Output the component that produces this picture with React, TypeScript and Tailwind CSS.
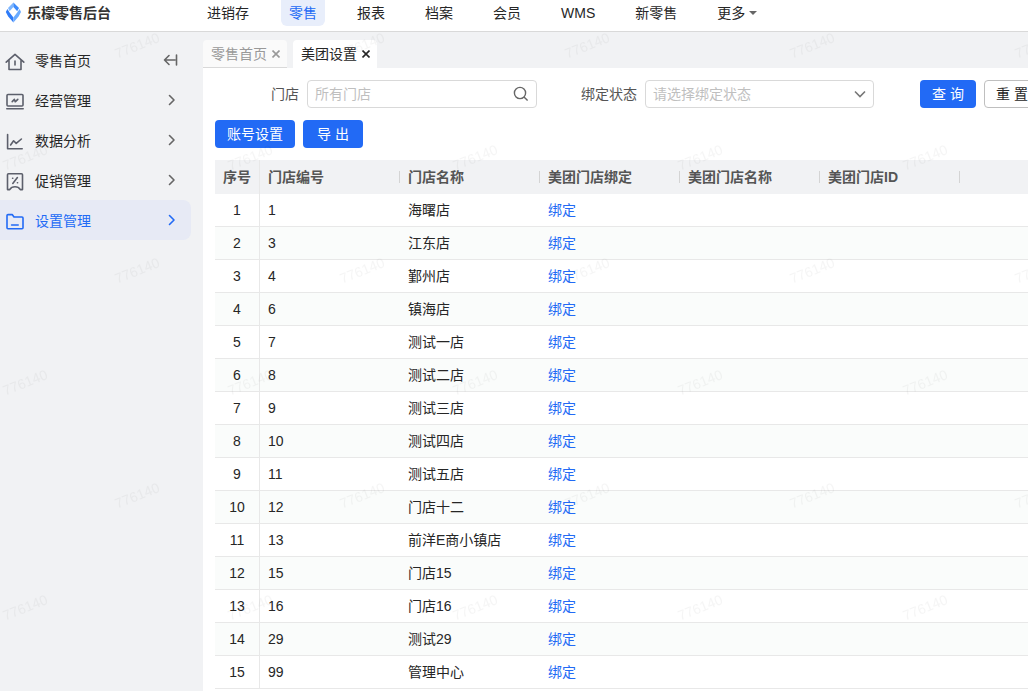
import React from 'react';

const navItems = ['进销存', '零售', '报表', '档案', '会员', 'WMS', '新零售'];

const stores = [
  { code: '1', name: '海曙店' },
  { code: '3', name: '江东店' },
  { code: '4', name: '鄞州店' },
  { code: '6', name: '镇海店' },
  { code: '7', name: '测试一店' },
  { code: '8', name: '测试二店' },
  { code: '9', name: '测试三店' },
  { code: '10', name: '测试四店' },
  { code: '11', name: '测试五店' },
  { code: '12', name: '门店十二' },
  { code: '13', name: '前洋E商小镇店' },
  { code: '15', name: '门店15' },
  { code: '16', name: '门店16' },
  { code: '29', name: '测试29' },
  { code: '99', name: '管理中心' },
];

const columns = ['门店编号', '门店名称', '美团门店绑定', '美团门店名称', '美团门店ID'];

function Icon({ children, className = '' }: { children: React.ReactNode; className?: string }) {
  return (
    <svg
      viewBox="0 0 20 20"
      className={`h-5 w-5 shrink-0 ${className}`}
      fill="none"
      stroke="currentColor"
      strokeWidth="1.6"
      strokeLinecap="round"
      strokeLinejoin="round"
      aria-hidden="true"
    >
      {children}
    </svg>
  );
}

const menuItems = [
  {
    label: '零售首页',
    icon: (
      <Icon>
        <path d="M1.2 10.2 10 2.4l8.8 7.8M4 8.4v9.1h12V8.4M10 9v4" />
      </Icon>
    ),
  },
  {
    label: '经营管理',
    icon: (
      <Icon>
        <rect x="2" y="2.5" width="16" height="11.5" rx="1" />
        <path d="M1.8 16.8h16.4M7.2 9.6l2.2-2.2.8 2.4 2.6-2.4" />
      </Icon>
    ),
  },
  {
    label: '数据分析',
    icon: (
      <Icon>
        <path d="M2.6 2.6v14.2h14.6M5.6 13l3-4.2 2.6 2.6L16.4 7" />
      </Icon>
    ),
  },
  {
    label: '促销管理',
    icon: (
      <Icon>
        <path d="M3.5 1.8h13q1 0 1 1v14.8h-2.2Q13.6 14.8 10 14.8t-5.3 2.8H2.5V2.8q0-1 1-1z" />
        <path d="m7.8 11.4 4.6-5.8M7.6 6.2h.2M12.4 10.8h.2" />
      </Icon>
    ),
  },
  {
    label: '设置管理',
    active: true,
    icon: (
      <Icon>
        <path d="M2 15.8V3.6q0-1 1-1h4.2l1.8 2.4h8q1 0 1 1v9.8q0 1-1 1H3q-1 0-1-1zM6.6 13h6.6" />
      </Icon>
    ),
  },
];

function Header() {
  return (
    <header className="flex h-8 items-start overflow-hidden border-b border-[#d9d9d9] bg-white">
      <div className="flex h-[26px] w-[199px] shrink-0 items-center gap-1 pl-1">
        <svg viewBox="0 0 19 22" className="h-[22px] w-[19px]" aria-hidden="true">
          <path d="M9.4.4 4 6l1.6 3.2L9.4 5z" fill="#7db6ff" />
          <path d="M9.4.4 15 6l-1.8 3.2L9.4 5z" fill="#3d8bfb" />
          <path d="M3.4 7 1.8 10l2.4 4.6 5.2 5.8v-4.8L5.6 10.6z" fill="#2f7cf8" />
          <path d="M15.6 7 17 10l-2.4 4.6-5.2 5.8v-4.8l3.8-5z" fill="#68aaff" />
        </svg>
        <span className="font-bold whitespace-nowrap text-[#333]">乐檬零售后台</span>
      </div>
      <nav className="flex gap-6">
        {navItems.map((item) => (
          <a
            key={item}
            href="#"
            className={`h-[26px] shrink-0 rounded-b-md px-2 leading-[26px] whitespace-nowrap ${
              item === '零售' ? 'bg-[#e8eefb] text-[#226af5]' : ''
            }`}
          >
            {item}
          </a>
        ))}
        <button type="button" className="flex h-[26px] shrink-0 items-center gap-1 pl-2 whitespace-nowrap">
          更多
          <svg viewBox="0 0 8 4" className="h-1 w-2" fill="#666" aria-hidden="true">
            <path d="M0 0h8L4 4z" />
          </svg>
        </button>
      </nav>
    </header>
  );
}

function Sidebar() {
  return (
    <aside className="w-[203px] shrink-0 pt-2 pr-3">
      {menuItems.map((item, i) => (
        <div
          key={item.label}
          className={`flex h-10 items-center rounded-r-lg pr-[10px] pl-[5px] ${
            item.active ? 'bg-[#e7eaf5] text-[#226af5]' : ''
          }`}
        >
          <a href="#" className="flex flex-1 items-center gap-[10px]">
            <span className={item.active ? 'pt-1' : 'pt-1 text-[#5c5f6b]'}>{item.icon}</span>
            <span className="pt-px">{item.label}</span>
          </a>
          <button
            type="button"
            aria-label={i === 0 ? '收起菜单' : `展开${item.label}`}
            className={item.active ? '' : 'text-[#666]'}
          >
            <Icon>
              {i === 0 ? <path d="M3.5 10H14M8 5.5 3.5 10 8 14.5M15.5 5v10" /> : <path d="m8.5 5.5 4.5 4.5-4.5 4.5" />}
            </Icon>
          </button>
        </div>
      ))}
    </aside>
  );
}

function Tab({ label, active }: { label: string; active?: boolean }) {
  return (
    <div
      className={`flex h-7 w-[84px] items-center justify-between rounded-t pr-[7px] pl-2 whitespace-nowrap ${
        active ? 'bg-white' : 'border-b border-[#d9d9d9] bg-[#fafafa] text-[#999]'
      }`}
    >
      <a href="#">{label}</a>
      <button type="button" aria-label={`关闭${label}`}>
        <svg viewBox="0 0 8 8" className="h-2 w-2" fill="none" stroke="currentColor" strokeWidth="1.6" aria-hidden="true">
          <path d="m.5.5 7 7m0-7-7 7" />
        </svg>
      </button>
    </div>
  );
}

function Filters() {
  return (
    <form className="flex items-center" onSubmit={(e) => e.preventDefault()}>
      <label htmlFor="store" className="w-[84px] shrink-0 text-right text-[#555]">
        门店
      </label>
      <div className="relative ml-2 w-[230px] shrink-0">
        <input
          id="store"
          type="text"
          placeholder="所有门店"
          className="h-7 w-full rounded border border-[#d9d9d9] bg-white pr-8 pl-[7px] placeholder:text-[#bfbfbf]"
        />
        <svg
          viewBox="0 0 16 16"
          className="pointer-events-none absolute top-[6px] right-2 h-4 w-4 text-[#666]"
          fill="none"
          stroke="currentColor"
          strokeWidth="1.4"
          aria-hidden="true"
        >
          <circle cx="7" cy="7" r="5.6" />
          <path d="m11 11 3.6 3.6" />
        </svg>
      </div>
      <label htmlFor="status" className="ml-4 w-[84px] shrink-0 text-right text-[#555]">
        绑定状态
      </label>
      <div className="relative ml-2 w-[229px] shrink-0">
        <select
          id="status"
          defaultValue=""
          className="block h-7 w-full appearance-none rounded border border-[#d9d9d9] bg-white pr-8 pl-[7px] text-[#bfbfbf]"
        >
          <option value="">请选择绑定状态</option>
          <option value="1">已绑定</option>
          <option value="0">未绑定</option>
        </select>
        <svg
          viewBox="0 0 12 12"
          className="pointer-events-none absolute top-2 right-2 h-3 w-3 text-[#777]"
          fill="none"
          stroke="currentColor"
          strokeWidth="1.6"
          aria-hidden="true"
        >
          <path d="m1 3.5 5 5 5-5" />
        </svg>
      </div>
      <button type="submit" className="ml-[46px] h-7 w-14 shrink-0 rounded bg-[#226af5] text-white">
        查 询
      </button>
      <button type="reset" className="ml-2 h-7 w-14 shrink-0 rounded border border-[#bfbfbf] bg-white">
        重 置
      </button>
    </form>
  );
}

function StoreTable() {
  return (
    <table className="w-full min-w-[900px] table-fixed border-separate border-spacing-0">
      <colgroup>
        <col className="w-[45px]" />
        {columns.map((c) => (
          <col key={c} className="w-[140px]" />
        ))}
        <col />
      </colgroup>
      <thead>
        <tr className="h-[34px] bg-[#f1f2f4] text-left text-[#555]">
          <th className="border-r border-[#e8e8e8] p-0 text-center font-bold">序号</th>
          {columns.map((c) => (
            <th key={c} className="p-0 font-bold">
              <div className="flex items-center justify-between pl-2">
                {c}
                <span className="h-3 w-px bg-[#d4d4d4]" />
              </div>
            </th>
          ))}
          <th />
        </tr>
      </thead>
      <tbody>
        {stores.map((store, i) => (
          <tr key={store.code} className="h-[33px] bg-white even:bg-[#fafcfb] [&>td]:border-b [&>td]:border-[#e8e8e8] [&>td]:py-0">
            <td className="border-r px-0 text-center">{i + 1}</td>
            <td className="px-2">{store.code}</td>
            <td className="px-2">{store.name}</td>
            <td className="px-2">
              <a href="#" className="text-[#226af5]">
                绑定
              </a>
            </td>
            <td />
            <td />
            <td />
          </tr>
        ))}
      </tbody>
    </table>
  );
}

// Repeating user id laid over everything below the header
function Watermark() {
  return (
    <svg className="pointer-events-none absolute inset-0 h-full w-full" aria-hidden="true">
      <defs>
        <pattern id="watermark" width="225" height="225" patternUnits="userSpaceOnUse">
          <g fill="#000" fillOpacity="0.04" fontSize="14" textAnchor="middle">
            <text transform="translate(139 18) rotate(-22)">776140</text>
            <text transform="translate(27 130) rotate(-22)">776140</text>
          </g>
        </pattern>
      </defs>
      <rect width="100%" height="100%" fill="url(#watermark)" />
    </svg>
  );
}

export default function App() {
  return (
    <div className="flex min-h-screen flex-col bg-[#f1f2f4] font-['Liberation_Sans','Noto_Sans_CJK_SC',sans-serif] text-sm text-[#262626]">
      <Header />
      <div className="relative flex flex-1 overflow-hidden">
        <Sidebar />
        <main className="flex min-w-0 flex-1 flex-col">
          <div className="flex gap-[6px] pt-2">
            <Tab label="零售首页" />
            <Tab label="美团设置" active />
          </div>
          <section className="flex flex-1 flex-col gap-3 overflow-hidden bg-white pt-3 pl-3">
            <Filters />
            <div className="flex gap-2">
              <button type="button" className="h-7 w-20 rounded bg-[#226af5] text-white">
                账号设置
              </button>
              <button type="button" className="h-7 w-[60px] rounded bg-[#226af5] text-white">
                导 出
              </button>
            </div>
            <StoreTable />
          </section>
        </main>
        <Watermark />
      </div>
    </div>
  );
}
